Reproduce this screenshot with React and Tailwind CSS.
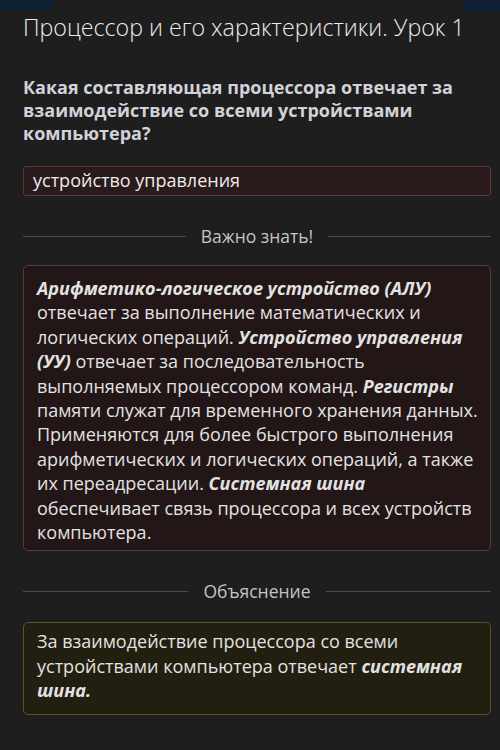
import React from "react";

function Divider({ label }) {
  return (
    <div className="flex h-[24px] items-center gap-[15px]">
      <div className="flex-1 h-px bg-[#4a4a4a]" />
      <span className="text-[17.5px] leading-[24px] text-[#c4c4c4]">{label}</span>
      <div className="flex-1 h-px bg-[#4a4a4a]" />
    </div>
  );
}

export default function App() {
  return (
    <div
      className="relative min-h-[750px] w-[500px] bg-[#1e1e1e] pl-[23px] pr-[9px] text-[#e4e4e4]"
      style={{ fontFamily: '"Open Sans", "Noto Sans", sans-serif' }}
    >
      <div className="absolute left-0 top-0 h-[10px] w-[52px] rounded-br-[3px] bg-[#0f2233]" />
      <div className="absolute right-0 top-0 h-[12px] w-[37px] rounded-bl-[3px] bg-[#0f2233]" />

      <h1 className="pt-[11px] text-[23.2px] font-light leading-[32px] text-[#ececec]">
        Процессор и его характеристики. Урок 1
      </h1>

      <p className="mt-[33px] text-[18px] font-bold leading-[23px] text-[#d2d2da]">
        Какая составляющая процессора отвечает за взаимодействие со всеми
        устройствами компьютера?
      </p>

      <div className="mt-[21px] h-[30px] rounded-[3px] border border-[#5c3838] bg-[#2a1a1b] pl-[9px] text-[18px] leading-[27px] text-[#ececec]">
        устройство управления
      </div>

      <div className="mt-[28px]">
        <Divider label="Важно знать!" />
      </div>

      <div className="mt-[17px] rounded-[5px] border border-[#5c3a3a] bg-[#231617] pl-[13px] pr-[6px] pt-[10px] pb-[6px] text-[18px] leading-[24.4px] text-[#e2e2e2]">
        <b className="italic">Арифметико-логическое устройство (АЛУ)</b>{" "}
        отвечает за выполнение математических и логических операций.{" "}
        <b className="italic">Устройство управления (УУ)</b> отвечает за
        последовательность выполняемых процессором команд.{" "}
        <b className="italic">Регистры</b> памяти служат для временного
        хранения данных. Применяются для более быстрого выполнения
        арифметических и логических операций, а также их переадресации.{" "}
        <b className="italic">Системная шина</b> обеспечивает связь процессора
        и всех устройств компьютера.
      </div>

      <div className="mt-[28px]">
        <Divider label="Объяснение" />
      </div>

      <div className="mt-[19px] rounded-[5px] border border-[#5a5326] bg-[#221f10] px-[13px] pt-[6px] pb-[11px] text-[18px] leading-[24.4px] text-[#e2e2e2]">
        За взаимодействие процессора со всеми устройствами компьютера отвечает{" "}
        <b className="italic">системная шина.</b>
      </div>
    </div>
  );
}
